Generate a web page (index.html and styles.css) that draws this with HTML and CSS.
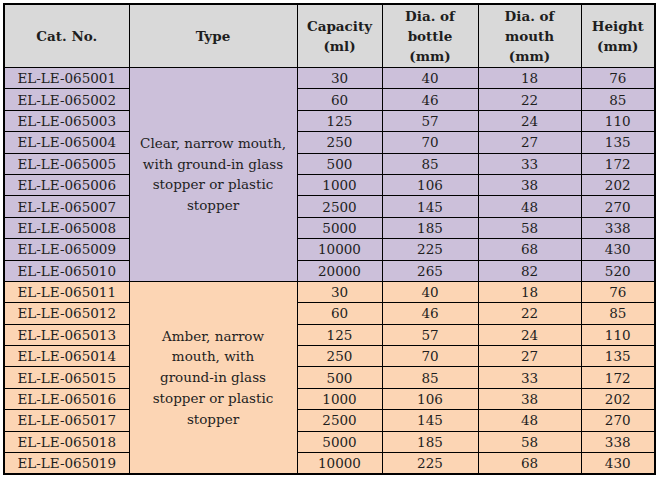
FILE: index.html
```html
<!DOCTYPE html>
<html>
<head>
<meta charset="utf-8">
<link rel="stylesheet" href="styles.css">
</head>
<body>
<table class="spec">
  <colgroup>
    <col class="c-cat"><col class="c-type"><col class="c-cap"><col class="c-bot"><col class="c-mou"><col class="c-hei">
  </colgroup>
  <thead>
    <tr class="head">
      <th>Cat. No.</th>
      <th>Type</th>
      <th>Capacity<br>(ml)</th>
      <th>Dia. of<br>bottle<br>(mm)</th>
      <th>Dia. of<br>mouth<br>(mm)</th>
      <th>Height<br>(mm)</th>
    </tr>
  </thead>
  <tbody class="clear">
    <tr><td>EL-LE-065001</td><td class="type" rowspan="10">Clear, narrow mouth,<br>with ground-in glass<br>stopper or plastic<br>stopper</td><td>30</td><td>40</td><td>18</td><td>76</td></tr>
    <tr><td>EL-LE-065002</td><td>60</td><td>46</td><td>22</td><td>85</td></tr>
    <tr><td>EL-LE-065003</td><td>125</td><td>57</td><td>24</td><td>110</td></tr>
    <tr><td>EL-LE-065004</td><td>250</td><td>70</td><td>27</td><td>135</td></tr>
    <tr><td>EL-LE-065005</td><td>500</td><td>85</td><td>33</td><td>172</td></tr>
    <tr><td>EL-LE-065006</td><td>1000</td><td>106</td><td>38</td><td>202</td></tr>
    <tr><td>EL-LE-065007</td><td>2500</td><td>145</td><td>48</td><td>270</td></tr>
    <tr><td>EL-LE-065008</td><td>5000</td><td>185</td><td>58</td><td>338</td></tr>
    <tr><td>EL-LE-065009</td><td>10000</td><td>225</td><td>68</td><td>430</td></tr>
    <tr><td>EL-LE-065010</td><td>20000</td><td>265</td><td>82</td><td>520</td></tr>
  </tbody>
  <tbody class="amber">
    <tr><td>EL-LE-065011</td><td class="type" rowspan="9">Amber, narrow<br>mouth, with<br>ground-in glass<br>stopper or plastic<br>stopper</td><td>30</td><td>40</td><td>18</td><td>76</td></tr>
    <tr><td>EL-LE-065012</td><td>60</td><td>46</td><td>22</td><td>85</td></tr>
    <tr><td>EL-LE-065013</td><td>125</td><td>57</td><td>24</td><td>110</td></tr>
    <tr><td>EL-LE-065014</td><td>250</td><td>70</td><td>27</td><td>135</td></tr>
    <tr><td>EL-LE-065015</td><td>500</td><td>85</td><td>33</td><td>172</td></tr>
    <tr><td>EL-LE-065016</td><td>1000</td><td>106</td><td>38</td><td>202</td></tr>
    <tr><td>EL-LE-065017</td><td>2500</td><td>145</td><td>48</td><td>270</td></tr>
    <tr><td>EL-LE-065018</td><td>5000</td><td>185</td><td>58</td><td>338</td></tr>
    <tr><td>EL-LE-065019</td><td>10000</td><td>225</td><td>68</td><td>430</td></tr>
  </tbody>
</table>
</body>
</html>
```
FILE: styles.css
```css
html, body {
  margin: 0;
  padding: 0;
  background: #ffffff;
}
body {
  padding: 3px 0 0 3px;
  font-family: "DejaVu Serif", "Liberation Serif", serif;
  font-size: 13.5px;
  color: #1e1e1e;
}
.spec {
  border-collapse: collapse;
  table-layout: fixed;
  width: 652px;
  border: 2px solid #000;
}
.c-cat { width: 125px; }
.c-type { width: 168px; }
.c-cap { width: 85px; }
.c-bot { width: 96px; }
.c-mou { width: 103px; }
.c-hei { width: 74px; }
.spec th, .spec td {
  border: 1px solid #000;
  padding: 0;
  text-align: center;
  vertical-align: middle;
  line-height: 20px;
}
.spec th {
  background: #d9d9d9;
  font-weight: bold;
  font-size: 13.5px;
  height: 62px;
}
.spec tbody tr {
  height: 21.4px;
}
.spec td {
  height: 20.4px;
}
.clear td { background: #ccc0da; }
.amber td { background: #fcd5b4; }
.spec td.type {
  line-height: 20.8px;
}
```
